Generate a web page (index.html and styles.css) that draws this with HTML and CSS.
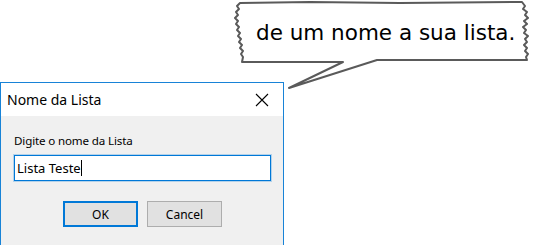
FILE: index.html
```html
<!DOCTYPE html>
<html lang="pt">
  <head>
    <meta charset="UTF-8" />
    <meta name="viewport" content="width=device-width, initial-scale=1.0" />
    <title>Nome da Lista</title>
    <link rel="stylesheet" href="styles.css">
  </head>
  <body>
    <div class="stage">
      <div class="bubble">
        <svg class="bubble-shape" width="307" height="95" viewBox="0 0 307 95">
          <path d="M10,3 L80,2 L170,3 L292,2
                   L295,6 L293,9 L297,12 L295,15 L298,18 L294,21 L297,24 L293,27 L296,30 L294,33 L298,36 L295,39 L297,42 L294,45 L297,48 L295,51 L298,54 L296,57 L297,60
                   L147,60 L59,88 L113,62 L12,62
                   L13,57 L11,54 L13,51 L10,48 L12,45 L9,42 L11,39 L8,36 L10,33 L7,30 L9,27 L6,24 L8,21 L5,18 L8,15 L6,12 L9,9 L7,6 Z"
                fill="#fff" stroke="#5a5a5a" stroke-width="2" stroke-linejoin="round" />
        </svg>
        <span class="bubble-text">de um nome a sua lista.</span>
      </div>

      <div class="dialog">
        <div class="titlebar">
          <span class="title">Nome da Lista</span>
          <svg class="close" width="14" height="14" viewBox="0 0 14 14">
            <path d="M1,1 L13,13 M13,1 L1,13" stroke="#000" stroke-width="1.1" />
          </svg>
        </div>
        <div class="content">
          <span class="prompt">Digite o nome da Lista</span>
          <div class="field">Lista Teste<span class="caret"></span></div>
          <div class="buttons">
            <button class="btn btn-default">OK</button>
            <button class="btn">Cancel</button>
          </div>
        </div>
      </div>
    </div>
  </body>
</html>
```

FILE: styles.css
```css
body {
  margin: 0;
  background-color: #fff;
  font-family: "Noto Sans", sans-serif;
  color: #000;
}

.stage {
  position: relative;
  width: 537px;
  height: 245px;
  overflow: hidden;
  padding-top: 82px;
  box-sizing: border-box;
}

.bubble {
  position: absolute;
  left: 230px;
  top: 0;
  width: 307px;
  height: 95px;
}

.bubble-shape {
  position: absolute;
  left: 0;
  top: 0;
}

.bubble-text {
  position: relative;
  display: block;
  padding: 20px 0 0 26px;
  font-family: "DejaVu Sans", sans-serif;
  font-size: 21.5px;
  line-height: 25px;
}

.dialog {
  width: 284px;
  height: 180px;
  box-sizing: border-box;
  border: 1px solid #1883d7;
  background-color: #f0f0f0;
}

.titlebar {
  display: flex;
  align-items: center;
  justify-content: space-between;
  height: 33px;
  padding: 0 14px 0 6px;
  background-color: #fff;
}

.title {
  font-size: 14px;
}

.close {
  display: block;
}

.content {
  display: flex;
  flex-direction: column;
  padding: 17px 12px 0 13px;
}

.prompt {
  font-size: 11.6px;
  line-height: 15px;
  letter-spacing: -0.15px;
}

.field {
  display: flex;
  align-items: center;
  margin-top: 7px;
  height: 26px;
  box-sizing: border-box;
  border: 1px solid #0078d7;
  box-shadow: 0 0 0 1px rgba(0, 120, 215, 0.25);
  padding: 0 2px;
  font-size: 13px;
  background-color: #fff;
}

.caret {
  display: inline-block;
  width: 1px;
  height: 16px;
  background-color: #000;
}

.buttons {
  display: flex;
  justify-content: center;
  gap: 9px;
  margin-top: 20px;
}

.btn {
  width: 75px;
  height: 26px;
  box-sizing: border-box;
  border: 1px solid #adadad;
  background-color: #e1e1e1;
  font-family: "Noto Sans", sans-serif;
  font-size: 12px;
  color: #000;
  padding: 0;
}

.btn-default {
  border: 2px solid #0078d7;
}
```
